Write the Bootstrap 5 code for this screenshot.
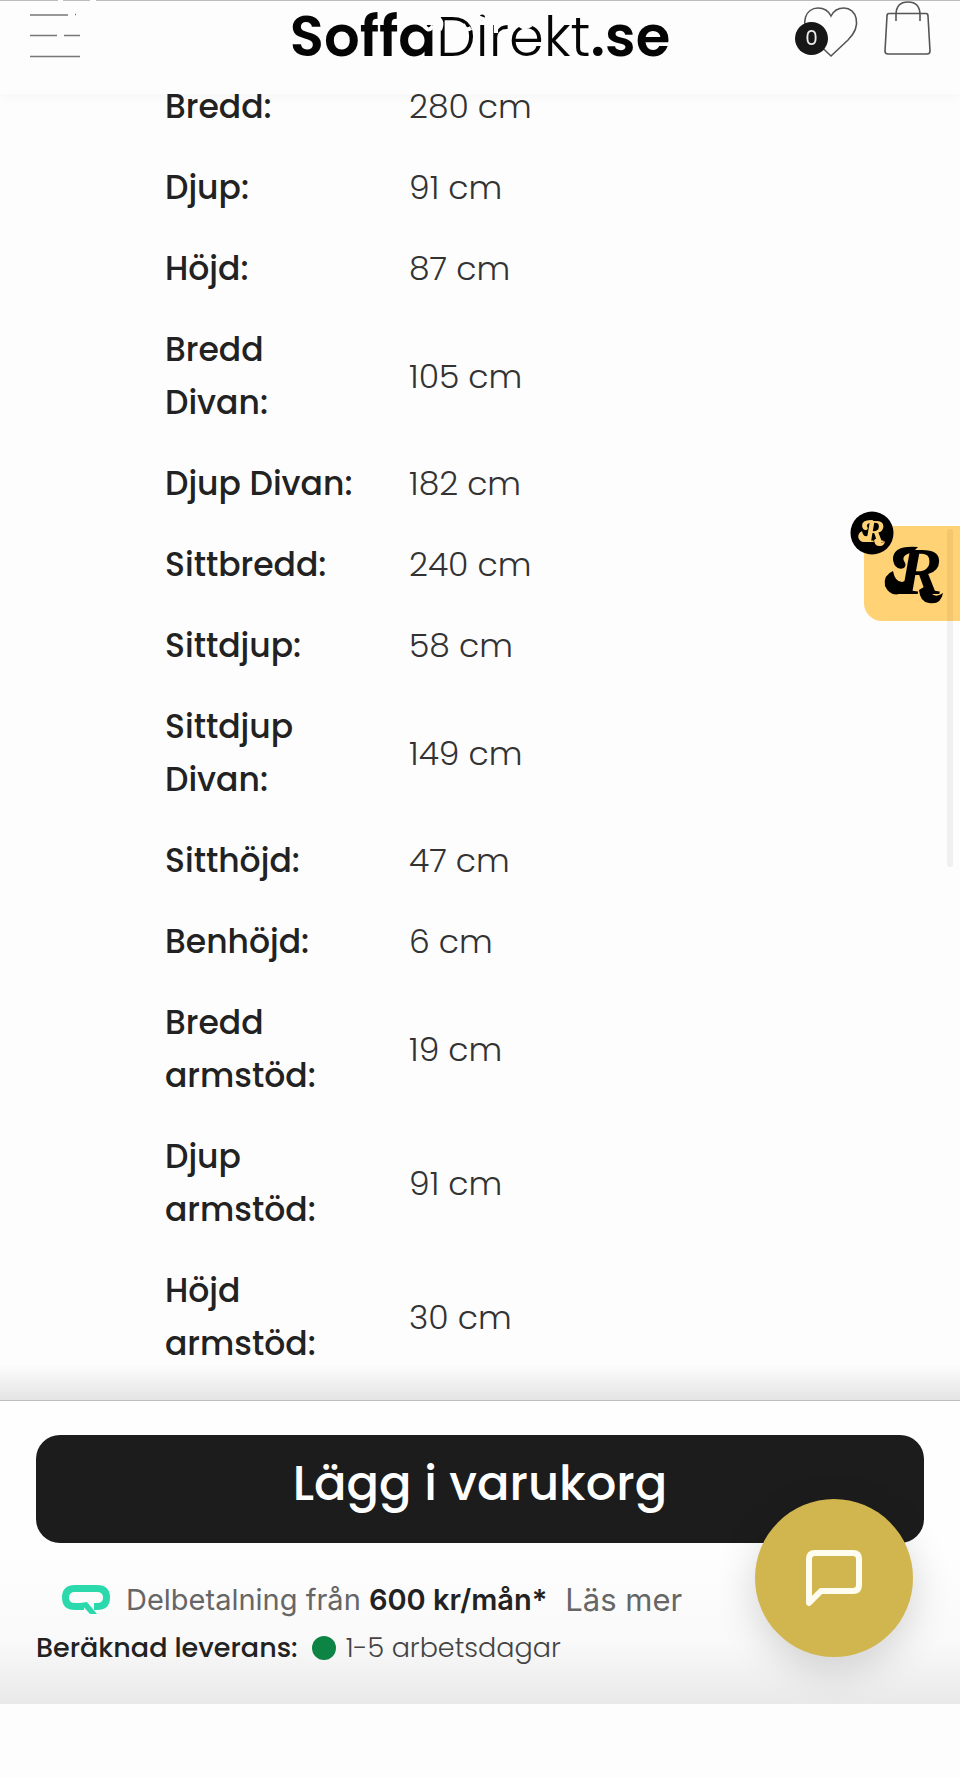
<!DOCTYPE html>
<html lang="sv">
<head>
<meta charset="utf-8">
<meta name="viewport" content="width=device-width, initial-scale=1">
<title>SoffaDirekt.se</title>
<link href="https://cdn.jsdelivr.net/npm/bootstrap@5.3.0/dist/css/bootstrap.min.css" rel="stylesheet">
<style>
  body { font-family: Poppins, Inter, sans-serif; background: #fdfdfd; color: #222; min-height: 100vh; }
  .site-header { height: 94px; padding: 0 28px; background: #fdfdfd; border-top: 1px solid #bdbdbd; box-shadow: 0 5px 10px rgba(0,0,0,.025); }
  .site-header svg, .promo svg, .chat svg, .pay-logo { display: block; overflow: visible; }
  .side-slot { width: 140px; }
  .plain-btn { background: none; border: 0; padding: 0; color: inherit; }
  .brand { font-size: 56px; line-height: 72px; color: #050505; font-weight: 600; text-decoration: none; }
  .brand-thin { font-weight: 300; }
  .glare { left: 132px; top: 8px; }
  .count { left: -7px; top: 21px; width: 33px; height: 33px; font-size: 20px; line-height: 33px; background: #171717; color: #eee; }
  .spec-area { padding: 66px 60px 0 165px; }
  .specs th, .specs td { font-size: 33px; line-height: 53px; padding: 14px 0; vertical-align: middle; text-align: left; }
  .specs th { font-weight: 500; width: 244px; padding-right: 44px; }
  .specs td { font-weight: 300; color: #333; }
  .promo { top: 526px; right: 0; width: 96px; height: 95px; background: #ffd276; border-radius: 18px 0 0 18px; z-index: 5; }
  .promo .big { position: absolute; left: 18px; top: 12px; }
  .promo .dot { position: absolute; left: -14px; top: -15px; }
  .scroll-thumb { top: 529px; right: 7px; width: 6px; height: 338px; background: rgba(0,0,0,.05); border-radius: 3px; z-index: 6; }
  .buy-wrap { background: #fdfdfd; padding-bottom: 74px; }
  .buy-bar { height: 304px; padding: 34px 36px 0; border-top: 1px solid #d2d2d2;
    background: linear-gradient(#fefefe 50%, #f9f9f9 80%, #e9e9e9); }
  .buy-bar::before { content: ""; position: absolute; left: 0; right: 0; bottom: 100%; height: 36px; background: linear-gradient(rgba(0,0,0,0), rgba(0,0,0,.1)); }
  .buy-btn { height: 108px; border-radius: 24px; background: #1c1c1c; color: #fff; font-size: 48px; font-weight: 500; line-height: 60px; padding: 0 0 10px; border: 0; }
  .buy-btn:hover { background: #2a2a2a; color: #fff; }
  .pay { margin: 33px 0 0 26px; font-size: 29px; line-height: 48px; font-family: Inter, sans-serif; color: #666; }
  .pay strong { font-weight: 600; color: #222; }
  .pay a { color: #666; text-decoration: none; margin-left: 18px; font-size: 31px; }
  .delivery { font-size: 27px; line-height: 48px; color: #444; font-weight: 300; }
  .delivery b { font-weight: 500; color: #222; }
  .stock { width: 24px; height: 24px; background: #0e8444; margin: 0 10px 0 14px; }
  .chat { right: 47px; top: 98px; width: 158px; height: 158px; background: #d1b64f; box-shadow: 0 12px 40px rgba(0,0,0,.16); }
</style>
</head>
<body>
<header class="site-header fixed-top d-flex justify-content-between align-items-start">
  <div class="side-slot">
    <button class="plain-btn" aria-label="Meny">
      <svg width="56" height="64" viewBox="0 0 56 64" fill="none" stroke="#777" stroke-width="1.5"><path d="M2 14H40M47 13.500H48M2 34.500H29M36 34.500H52M2 55.500H52"/><path d="M30 -.5H35M62 -.5H68" stroke="#fff" stroke-width="2"/></svg>
    </button>
  </div>
  <a class="brand position-relative" href="#">Soffa<span class="brand-thin">Direkt</span>.se
    <svg class="glare position-absolute" width="130" height="24" viewBox="0 0 130 24" fill="none" stroke="#fdfdfd" stroke-width="4"><path d="M2 14Q5 25 11 17M10 7Q23 9 18 21M41 15Q43 23 49 19M56 8L64 11M74 14V24M96 14Q101 21 109 16"/></svg>
  </a>
  <div class="side-slot d-flex justify-content-end">
    <a class="position-relative me-4" href="#" aria-label="Favoriter">
      <svg width="58" height="60" viewBox="0 0 58 60" fill="none" stroke="#555" stroke-width="1.600"><path d="M29 55L46 39C61 24 54 7 42 7Q33 7 29 15Q25 7 16 7C4 7 -3 22 9 36Z"/></svg>
      <span class="count position-absolute rounded-circle text-center">0</span>
    </a>
    <a href="#" aria-label="Varukorg">
      <svg width="48" height="60" viewBox="0 0 48 60" fill="none" stroke="#555" stroke-width="1.600"><path d="M5 12.500H42Q44 12.500 44 15L46 50Q46 53 43 53H4Q1 53 1 50L3 15Q3 12.500 5 12.500ZM12 20V14Q12 1 24 1Q36 1 36 14V20"/></svg>
    </a>
  </div>
</header>

<main class="spec-area">
  <table class="specs w-100">
    <tbody>
      <tr><th scope="row">Bredd:</th><td>280 cm</td></tr>
      <tr><th scope="row">Djup:</th><td>91 cm</td></tr>
      <tr><th scope="row">Höjd:</th><td>87 cm</td></tr>
      <tr><th scope="row">Bredd Divan:</th><td>105 cm</td></tr>
      <tr><th scope="row">Djup Divan:</th><td>182 cm</td></tr>
      <tr><th scope="row">Sittbredd:</th><td>240 cm</td></tr>
      <tr><th scope="row">Sittdjup:</th><td>58 cm</td></tr>
      <tr><th scope="row">Sittdjup Divan:</th><td>149 cm</td></tr>
      <tr><th scope="row">Sitthöjd:</th><td>47 cm</td></tr>
      <tr><th scope="row">Benhöjd:</th><td>6 cm</td></tr>
      <tr><th scope="row">Bredd armstöd:</th><td>19 cm</td></tr>
      <tr><th scope="row">Djup armstöd:</th><td>91 cm</td></tr>
      <tr><th scope="row">Höjd armstöd:</th><td>30 cm</td></tr>
    </tbody>
  </table>
</main>

<aside class="promo position-fixed">
  <svg class="big" width="78" height="82" viewBox="0 0 78 82">
    <g id="emblem"><text x="15" y="56" font-family="Liberation Serif, serif" font-weight="700" font-style="italic" font-size="68">R</text>
    <path d="M36 9Q10 7 11 22Q13 33 22 30Q25 27 22 23Q19 17 31 14ZM11 33Q1 37 3 48Q9 61 23 54Q30 48 31 40L20 44Q13 44 11 33ZM45 47Q50 63 61 55Q59 67 47 65Q38 64 37 52Z"/></g>
  </svg>
  <svg class="dot" width="44" height="44" viewBox="0 0 44 44"><circle cx="22" cy="22" r="21.500"/><use href="#emblem" fill="#ffd276" transform="translate(7 5) scale(.46)"/></svg>
</aside>
<div class="scroll-thumb position-fixed"></div>

<footer class="buy-wrap fixed-bottom">
  <div class="buy-bar position-relative">
    <button class="buy-btn btn w-100 d-block">Lägg i varukorg</button>
    <div class="pay d-flex align-items-center">
      <svg class="pay-logo me-3" width="48" height="30" viewBox="0 0 48 30" fill="none" stroke="#2bd9ad" stroke-width="7"><path d="M22 21.500H13Q3.500 21.500 3.500 12.500T13 3.500H35Q44.500 3.500 44.500 12.500T35 21.500H32"/><path d="M18 18L25 17L35 29H28Z" fill="#2bd9ad" stroke="none"/></svg>
      <span>Delbetalning från <strong>600 kr/mån*</strong></span><a href="#">Läs mer</a>
    </div>
    <div class="delivery d-flex align-items-center"><b>Beräknad leverans:</b><span class="stock rounded-circle"></span><span>1-5 arbetsdagar</span></div>
    <button class="chat plain-btn position-absolute rounded-circle d-flex align-items-center justify-content-center" aria-label="Chatt">
      <svg width="60" height="60" viewBox="0 0 60 60" fill="none" stroke="#fffdf0" stroke-width="6" stroke-linejoin="round"><path d="M5 55V11Q5 5 11 5H49Q55 5 55 11V37Q55 43 49 43H17Z"/></svg>
    </button>
  </div>
</footer>
<script src="https://cdn.jsdelivr.net/npm/bootstrap@5.3.0/dist/js/bootstrap.bundle.min.js"></script>
</body>
</html>
